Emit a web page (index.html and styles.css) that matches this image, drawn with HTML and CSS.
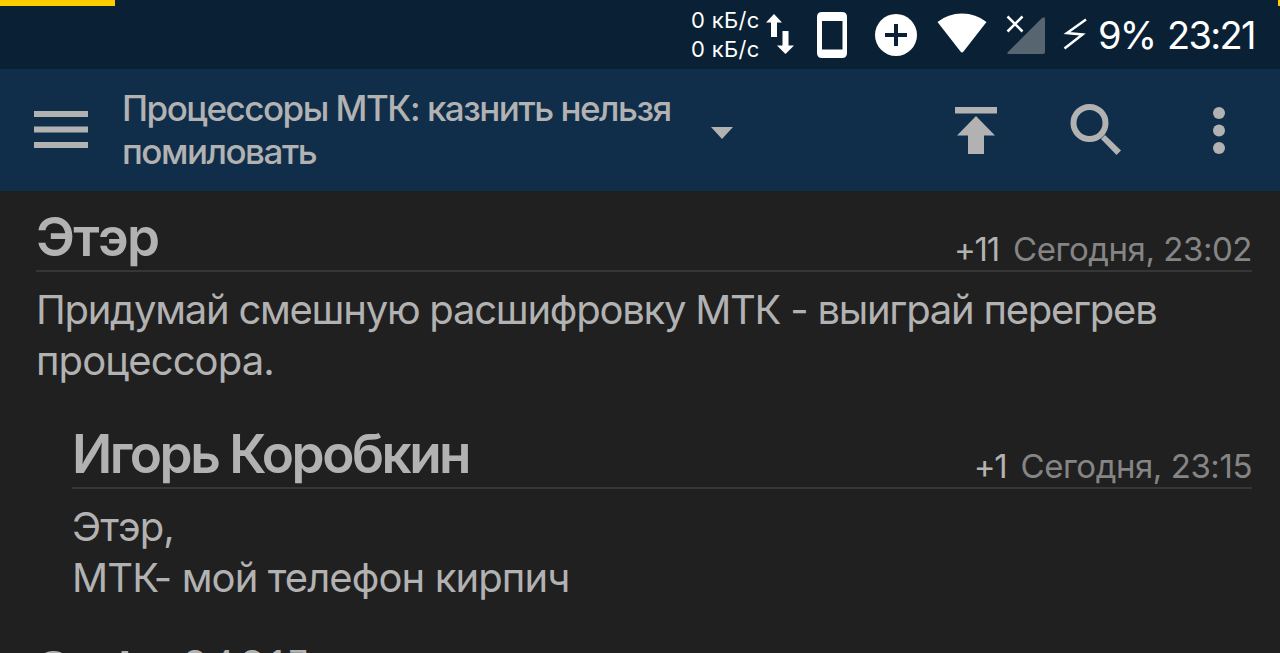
FILE: index.html
```html
<!DOCTYPE html>
<html lang="ru">
<head>
    <meta charset="UTF-8">
    <meta name="viewport" content="width=device-width, initial-scale=1.0">
    <title>Комментарии</title>
    <link rel="stylesheet" href="styles.css">
</head>
<body>

    <div class="statusbar">
        <span class="strip strip-left"></span>
        <span class="strip strip-right"></span>
        <div class="speed">
            <span>0 кБ/с</span>
            <span>0 кБ/с</span>
        </div>
        <svg class="status-icons" width="325" height="69" viewBox="765 0 325 69">
            <path fill="#fff" d="M774 14l8 8.500h-5V37h-6V22.500h-5zM782.500 31h6v14.500h5.500l-8.500 8.500-8.500-8.500h5.500z"/>
            <path fill="#fff" fill-rule="evenodd" d="M822 12h20q5 0 5 5v36q0 5-5 5h-20q-5 0-5-5V17q0-5 5-5zm0 9v28.500h20.500V21z"/>
            <circle cx="896" cy="35" r="21" fill="#fff"/>
            <path stroke="#0a2135" stroke-width="4" d="M885 35h22M896 24v22"/>
            <path fill="#fff" d="M937.500 22Q948 13.500 962 13.500T986.500 22L963.500 51.500q-1.500 2-3 0z"/>
            <path fill="#566570" d="M1045 19v33q0 2-2 2h-34q-3 0-1-2l34-34q3-2 3 1z"/>
            <path stroke="#0a2135" stroke-width="7" d="M1007.500 16.500l15 15M1022.500 16.500l-15 15"/>
            <path stroke="#fff" stroke-width="2.500" d="M1007.500 16.500l15 15M1022.500 16.500l-15 15"/>
            <path fill="none" stroke="#fff" stroke-width="2.500" d="M1086 19.500L1067 33l15.500 1.500L1064.500 48.500"/>
        </svg>
        <span class="battery">9%</span>
        <span class="clock">23:21</span>
    </div>

    <div class="toolbar">
        <svg class="menu" width="56" height="40" viewBox="0 0 56 40">
            <path fill="#b2b2b2" d="M1 1h54v6H1zM1 16.500h54v6H1zM1 32h54v6H1z"/>
        </svg>
        <h1 class="title">Процессоры МТК: казнить нельзя<br>помиловать</h1>
        <svg class="actions" width="580" height="122" viewBox="700 69 580 122">
            <g fill="#b2b2b2">
                <path d="M711 127h22l-11 12z"/>
                <path d="M955 107h42v6.500h-42zM976 116l19 19.500h-11V154h-16v-18.500h-11z"/>
                <path d="M1105 135l16 15.500-4.500 4.500-15.500-16z"/>
                <circle cx="1219" cy="113" r="6"/>
                <circle cx="1219" cy="130.500" r="6"/>
                <circle cx="1219" cy="148" r="6"/>
            </g>
            <circle cx="1089.500" cy="123" r="16" fill="none" stroke="#b2b2b2" stroke-width="6"/>
        </svg>
    </div>

    <div class="comments">
        <div class="comment">
            <div class="comment-head">
                <h2 class="author">Этэр</h2>
                <div class="meta">
                    <span class="rating">+11</span>
                    <span class="date">Сегодня, 23:02</span>
                </div>
            </div>
            <p class="text">Придумай смешную расшифровку МТК - выиграй перегрев<br><span class="loose">процессора.</span></p>
        </div>

        <div class="comment reply">
            <div class="comment-head">
                <h2 class="author author-tight">Игорь Коробкин</h2>
                <div class="meta">
                    <span class="rating">+1</span>
                    <span class="date">Сегодня, 23:15</span>
                </div>
            </div>
            <p class="text loose">Этэр,<br>МТК- мой телефон кирпич</p>
        </div>

        <div class="comment next">
            <h2 class="author">Sash</h2>
            <span class="device">G4G17</span>
        </div>
    </div>

</body>
</html>
```

FILE: styles.css
```css
body {
    font-family: Inter, "Noto Sans", sans-serif;
    background-color: #202020;
    color: #b2b2b2;
    margin: 0;
    height: 653px;
    overflow: hidden;
}

h1, h2, p {
    margin: 0;
}

svg {
    display: block;
    flex: none;
}

.statusbar {
    position: relative;
    display: flex;
    align-items: center;
    height: 69px;
    background-color: #0a2135;
    color: #fff;
    white-space: nowrap;
}

.strip {
    position: absolute;
    top: 0;
    height: 5.5px;
    background-color: #fc0;
}

.strip-left {
    left: 0;
    width: 115px;
}

.strip-right {
    right: 0;
    width: 2px;
}

.speed {
    display: flex;
    flex-direction: column;
    width: 74px;
    margin-left: 691px;
    font-size: 22px;
    letter-spacing: 0.3px;
    line-height: 29px;
}

.battery, .clock {
    padding-top: 2px;
    font-size: 38px;
    line-height: 69px;
    letter-spacing: -1.7px;
}

.battery {
    width: 69px;
    margin-left: 8px;
}

.toolbar {
    display: flex;
    align-items: center;
    height: 122px;
    background-color: #102e4a;
}

.menu {
    margin-left: 33px;
}

.title {
    width: 578px;
    margin-left: 33px;
    font-size: 35px;
    font-weight: 500;
    letter-spacing: -1.5px;
    line-height: 43px;
    white-space: nowrap;
}

.comments {
    padding: 0 28px 0 36px;
}

.comment-head {
    display: flex;
    justify-content: space-between;
    height: 79px;
    border-bottom: 2px solid #363636;
    white-space: nowrap;
}

.author {
    font-size: 53px;
    font-weight: 600;
    letter-spacing: -1.7px;
    line-height: 93px;
}

.author-tight {
    letter-spacing: -2.5px;
}

.meta {
    display: flex;
    gap: 14px;
    padding-top: 12px;
    font-size: 33px;
    line-height: 93px;
}

.rating {
    letter-spacing: -1.2px;
}

.date {
    color: #858585;
    letter-spacing: -0.45px;
}

.text {
    padding-top: 12px;
    font-size: 40px;
    letter-spacing: -1.25px;
    line-height: 51px;
    white-space: nowrap;
}

.loose {
    letter-spacing: -0.9px;
}

.reply {
    margin: 22px 0 0 36px;
}

.next {
    display: flex;
    margin-top: 22px;
}

.next .author {
    width: 146px;
    letter-spacing: -4px;
}

.device {
    font-size: 34px;
    letter-spacing: 5px;
    line-height: 76px;
}
```
